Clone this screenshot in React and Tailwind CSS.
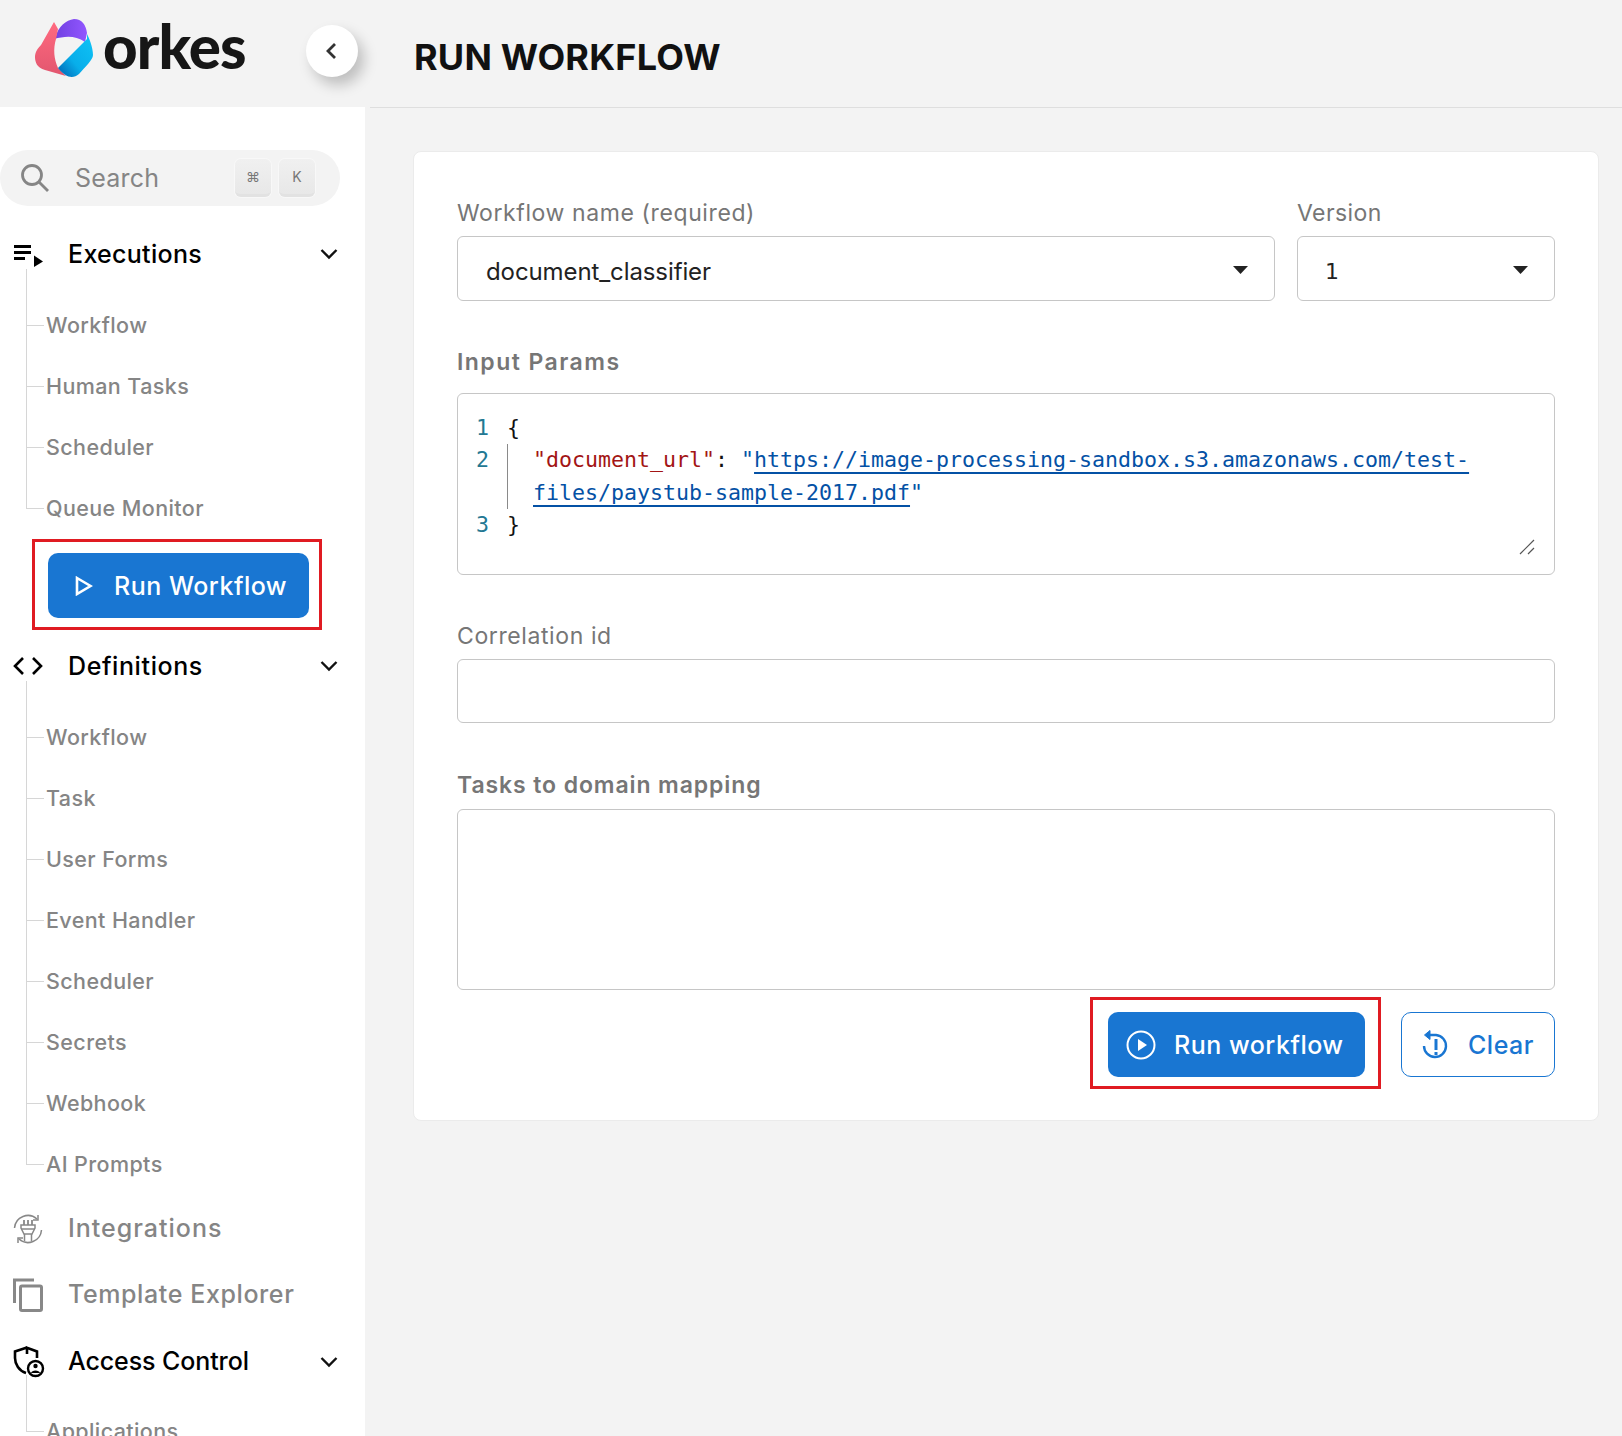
import React from "react";

const font = { fontFamily: "Inter, sans-serif" };

function Chevron() {
  return (
    <svg width="18" height="12" viewBox="0 0 18 12" fill="none" stroke="#111" strokeWidth="2.4" className="shrink-0">
      <path d="M1.5 2 L9 9.5 L16.5 2" />
    </svg>
  );
}

function ExecIcon() {
  return (
    <svg width="31" height="26" viewBox="0 0 31 26" fill="#000">
      <rect x="1" y="4" width="17" height="3" />
      <rect x="1" y="10" width="17" height="3" />
      <rect x="1" y="16" width="11" height="3" />
      <path d="M21 14.5 L30 20.5 L21 26 Z" />
    </svg>
  );
}

function CodeIcon() {
  return (
    <svg width="30" height="20" viewBox="0 0 30 20" fill="none" stroke="#000" strokeWidth="2.6">
      <path d="M10 2 L2 10 L10 18" />
      <path d="M20 2 L28 10 L20 18" />
    </svg>
  );
}

function PlugIcon() {
  return (
    <svg width="30" height="30" viewBox="0 0 30 30" fill="none" stroke="#888" strokeWidth="1.5">
      <path d="M1.5 14 A13.5 13.5 0 0 1 24 5" />
      <path d="M28.5 16 A13.5 13.5 0 0 1 6 25" />
      <path d="M25 1 V6 H20" />
      <path d="M5 29 V24 H10" />
      <path d="M11 6 V11 M15 6 V11 M19 6 V11" strokeWidth="1.8" />
      <path d="M8 11 H22 V14 L19 20 H11 L8 14 Z" />
      <path d="M8 15 H22" />
      <path d="M11.5 20 V27 M18.5 20 V27" />
    </svg>
  );
}

function CopyIcon() {
  return (
    <svg width="30" height="34" viewBox="0 0 30 34" fill="none" stroke="#888" strokeWidth="3">
      <path d="M1.5 25 V2 H21" />
      <rect x="7.5" y="8" width="21" height="24.5" rx="1.5" />
    </svg>
  );
}

function ShieldIcon() {
  return (
    <svg width="32" height="32" viewBox="0 0 32 32" fill="none">
      <path d="M14 8 V1.8 L24 5.5 V12 M13 27 C6 25 2 18 2 12 V5.5 L14 1.5" stroke="#000" strokeWidth="2.6" />
      <circle cx="22.5" cy="22.5" r="7.5" fill="#fff" stroke="#000" strokeWidth="2.4" />
      <circle cx="22.5" cy="20" r="2.2" fill="#000" />
      <path d="M18 27 C18.5 23.5 26.5 23.5 27 27 Z" fill="#000" />
    </svg>
  );
}

function TreeList({ items, top = "mt-[14px]" }) {
  return (
    <div className={`relative ml-[26px] ${top}`}>
      <div className="absolute left-0 top-[-26px] bottom-[30px] w-px bg-[#d6d6d6]" />
      {items.map((item) => (
        <div key={item} className="flex h-[61px] items-center">
          <div className="h-px w-[18px] shrink-0 bg-[#d6d6d6]" />
          <span className="ml-[2px] text-[21.5px] font-medium tracking-[0.4px] text-[#858585]">{item}</span>
        </div>
      ))}
    </div>
  );
}

function SectionRow({ icon, label, dark, chevron, top, textClass }) {
  return (
    <div className={`flex h-[54px] items-center ${top}`}>
      <div className="ml-[13px] flex w-[55px] shrink-0 items-center">{icon}</div>
      <span className={`text-[25px] font-medium ${dark ? "text-black" : "text-[#858585]"} ${textClass}`}>{label}</span>
      {chevron && (
        <div className="ml-auto mr-[27px]">
          <Chevron />
        </div>
      )}
    </div>
  );
}

function Sidebar() {
  return (
    <aside className="h-full w-[365px] shrink-0 overflow-hidden bg-white">
      <div className="mt-[43px] flex h-[56px] w-[340px] items-center rounded-full bg-[#f3f3f3]">
        <svg width="30" height="30" viewBox="0 0 30 30" fill="none" stroke="#858585" strokeWidth="2.8" className="ml-[20px]">
          <circle cx="12" cy="12" r="9.5" />
          <path d="M19 19 L28 28" />
        </svg>
        <span className="ml-[25px] mt-[2px] text-[25px] tracking-[0.2px] text-[#858585]">Search</span>
        <div className="ml-auto mr-[25px] flex gap-2">
          {["⌘", "K"].map((k) => (
            <div
              key={k}
              className="flex h-[38px] w-[36px] items-center justify-center rounded-[6px] border-b-[3px] border-[#e2e2e2] bg-gradient-to-b from-[#f0f0f0] to-[#e8e8e8] text-[14px] text-[#777] shadow-[0_0_0_1px_#f8f8f8]"
            >
              {k}
            </div>
          ))}
        </div>
      </div>

      <SectionRow top="mt-[21px]" dark chevron label="Executions" textClass="mt-[2px] tracking-[0.3px]" icon={<ExecIcon />} />
      <TreeList items={["Workflow", "Human Tasks", "Scheduler", "Queue Monitor"]} />

      <div className="ml-[32px] flex h-[91px] w-[290px] items-start border-[3px] border-[#e01b22] pl-[13px] pt-[11px]">
        <div className="flex h-[65px] w-[261px] items-center rounded-[10px] bg-[#1976d2] text-white">
          <svg width="18" height="20" viewBox="0 0 18 20" fill="none" stroke="#fff" strokeWidth="2.6" className="ml-[27px]">
            <path d="M2 2 L15.5 10 L2 18 Z" />
          </svg>
          <span className="ml-[21px] mt-[2px] text-[25px] font-medium tracking-[0.5px]">Run Workflow</span>
        </div>
      </div>

      <SectionRow top="mt-[9px]" dark chevron label="Definitions" textClass="mt-[2px] tracking-[0.6px]" icon={<CodeIcon />} />
      <TreeList items={["Workflow", "Task", "User Forms", "Event Handler", "Scheduler", "Secrets", "Webhook", "AI Prompts"]} />

      <SectionRow top="mt-[7px]" label="Integrations" textClass="tracking-[1px]" icon={<PlugIcon />} />
      <SectionRow top="mt-[12px]" label="Template Explorer" textClass="tracking-[0.6px]" icon={<CopyIcon />} />
      <SectionRow top="mt-[13px]" dark chevron label="Access Control" textClass="tracking-[-0.1px]" icon={<ShieldIcon />} />
      <TreeList items={["Applications"]} top="mt-[12px]" />
    </aside>
  );
}

function Logo() {
  return (
    <div className="flex items-center">
      <svg width="60" height="60" viewBox="0 0 60 60" className="shrink-0">
        <defs>
          <linearGradient id="lp" x1="0" y1="0" x2="1" y2="0">
            <stop offset="0" stopColor="#6f3fe0" />
            <stop offset="1" stopColor="#9257ff" />
          </linearGradient>
          <linearGradient id="lr" x1="0" y1="0" x2="0" y2="1">
            <stop offset="0" stopColor="#ff6a7f" />
            <stop offset="1" stopColor="#e2566f" />
          </linearGradient>
          <linearGradient id="lb" x1="1" y1="0" x2="0" y2="1">
            <stop offset="0" stopColor="#0fc4f7" />
            <stop offset="0.6" stopColor="#08aeea" />
            <stop offset="1" stopColor="#0060b0" />
          </linearGradient>
        </defs>
        <path d="M21 17 C23 8 31 1 39 0 C47 0 51 6 52 14 L50 23 C40 16 30 17 19 20 Z" fill="url(#lp)" />
        <path d="M19 3 L23 10 L21 20 C18 30 19 40 23 49 L31 57 L10 51 C2 49 0 43 0 38 C0 33 3 29 6 26 Z" fill="url(#lr)" />
        <path d="M52 15 C54 19 58 28 58 36 C58 41 50 48 44 55 C38 60 31 59 23 49 L52 20 Z" fill="url(#lb)" />
      </svg>
      <span
        className="ml-[8px] mt-[-6px] text-[60px] font-black leading-none tracking-[-0.9px] text-[#161616]"
        style={{ fontFamily: "Lato, sans-serif" }}
      >
        orkes
      </span>
    </div>
  );
}

function Header() {
  return (
    <header className="flex h-[107px] shrink-0 items-center">
      <div className="ml-[35px] mt-[-10px] flex w-[271px] shrink-0">
        <Logo />
      </div>
      <div className="mt-[-6px] flex h-[52px] w-[52px] shrink-0 items-center justify-center rounded-full bg-white shadow-[6px_8px_14px_rgba(0,0,0,0.22)]">
        <svg width="12" height="18" viewBox="0 0 12 18" fill="none" stroke="#333" strokeWidth="2.8" className="mr-[2px]">
          <path d="M10 2 L3 9 L10 16" />
        </svg>
      </div>
      <h1 className="ml-[56px] mt-[6px] text-[36px] font-bold tracking-[0.2px] text-[#111]">RUN WORKFLOW</h1>
    </header>
  );
}

function Label({ children, strong, className = "" }) {
  return (
    <div className={`flex h-[28px] items-center text-[23px] ${strong ? "font-semibold" : ""} text-[#767676] ${className}`}>
      {children}
    </div>
  );
}

function Select({ value, alt }) {
  return (
    <div className="flex h-[65px] items-center rounded-[6px] border border-[#c6c6c6] bg-white pl-[28px] pr-[26px]">
      <span
        className={`mt-[6px] text-[#222] ${alt ? "ml-[-1px] text-[22px]" : "text-[24px] tracking-[-0.1px]"}`}
        style={alt ? { fontFamily: "'DejaVu Sans', sans-serif" } : undefined}
      >
        {value}
      </span>
      <svg width="15" height="8" viewBox="0 0 15 8" className="ml-auto mt-[3px]">
        <path d="M0 0 H15 L7.5 8 Z" fill="#222" />
      </svg>
    </div>
  );
}

function Editor() {
  const mono = { fontFamily: "'DejaVu Sans Mono', monospace" };
  return (
    <div className="relative h-[182px] rounded-[6px] border border-[#c6c6c6] bg-white pt-[18px] text-[21.6px] leading-[32.3px]" style={mono}>
      <div className="flex">
        <div className="w-[31px] shrink-0 text-right text-[#237893]">
          <div>1</div>
          <div>2</div>
          <div>&nbsp;</div>
          <div>3</div>
        </div>
        <div className="ml-[18px] flex-1 text-[#111]">
          <div>{"{"}</div>
          <div className="border-l border-[#8a8a8a] pl-[25px]">
            <div>
              <span className="text-[#a31515]">"document_url"</span>
              <span>: </span>
              <span className="text-[#0451a5]">"</span>
              <span className="text-[#0451a5] underline decoration-[#0451a5] decoration-2 underline-offset-[5px]">https://image-processing-sandbox.s3.amazonaws.com/test-</span>
            </div>
            <div>
              <span className="text-[#0451a5] underline decoration-[#0451a5] decoration-2 underline-offset-[5px]">files/paystub-sample-2017.pdf</span>
              <span className="text-[#0451a5]">"</span>
            </div>
          </div>
          <div>{"}"}</div>
        </div>
      </div>
      <svg width="16" height="16" viewBox="0 0 16 16" stroke="#555" strokeWidth="1.2" className="absolute bottom-[19px] right-[19px]">
        <path d="M1 15 L15 1 M9 15 L15 9" />
      </svg>
    </div>
  );
}

function Card() {
  return (
    <section className="ml-[48px] mr-[23px] mt-[43px] h-[970px] rounded-[8px] border border-[#ebebeb] bg-white px-[43px] pt-[47px]">
      <div className="flex gap-[22px]">
        <div className="flex-1">
          <Label className="mb-[9px] tracking-[0.6px]">Workflow name (required)</Label>
          <Select value="document_classifier" />
        </div>
        <div className="w-[258px] shrink-0">
          <Label className="mb-[9px] tracking-[0.4px]">Version</Label>
          <Select value="1" alt />
        </div>
      </div>

      <Label strong className="mb-[17px] mt-[47px] tracking-[1.45px]">Input Params</Label>
      <Editor />

      <Label className="mb-[9px] mt-[47px] tracking-[0.6px]">Correlation id</Label>
      <div className="h-[64px] rounded-[6px] border border-[#c6c6c6] bg-white" />

      <Label strong className="mb-[10px] mt-[48px] tracking-[0.9px]">Tasks to domain mapping</Label>
      <div className="h-[181px] rounded-[6px] border border-[#c6c6c6] bg-white" />

      <div className="mt-[7px] flex items-start justify-end">
        <div className="h-[92px] w-[291px] border-[3px] border-[#e01b22] pl-[15px] pt-[12px]">
          <div className="flex h-[65px] w-[257px] items-center rounded-[10px] bg-[#1976d2] text-white">
            <svg width="30" height="30" viewBox="0 0 30 30" fill="none" className="ml-[18px] shrink-0">
              <circle cx="15" cy="15" r="13.5" stroke="#fff" strokeWidth="2" />
              <path d="M12 9 L21 15 L12 21 Z" fill="#fff" />
            </svg>
            <span className="ml-[18px] mt-[2px] text-[25px] font-medium tracking-[0.5px]">Run workflow</span>
          </div>
        </div>
        <div className="ml-[20px] mt-[15px] flex h-[65px] w-[154px] items-center rounded-[10px] border border-[#1976d2] bg-white text-[#1976d2]">
          <svg width="28" height="32" viewBox="0 0 28 32" fill="none" stroke="#1976d2" strokeWidth="2.4" className="ml-[19px] shrink-0">
            <path d="M8 6 H15 A11 11 0 1 1 3 17" />
            <path d="M9 1.5 L3.5 6 L9 10.5 Z" fill="#1976d2" strokeWidth="1" />
            <path d="M15 10 V21" strokeWidth="3" />
            <path d="M15 23 V26" strokeWidth="3" />
          </svg>
          <span className="ml-[19px] mt-[2px] text-[25px] font-medium tracking-[0.5px]">Clear</span>
        </div>
      </div>
    </section>
  );
}

export default function App() {
  return (
    <div className="flex h-[1436px] w-[1622px] flex-col overflow-hidden bg-[#f3f3f3]" style={font}>
      <Header />
      <div className="flex min-h-0 flex-1">
        <Sidebar />
        <main className="min-w-0 flex-1">
          <div className="ml-[5px] h-px bg-[#dedede]" />
          <Card />
        </main>
      </div>
    </div>
  );
}
